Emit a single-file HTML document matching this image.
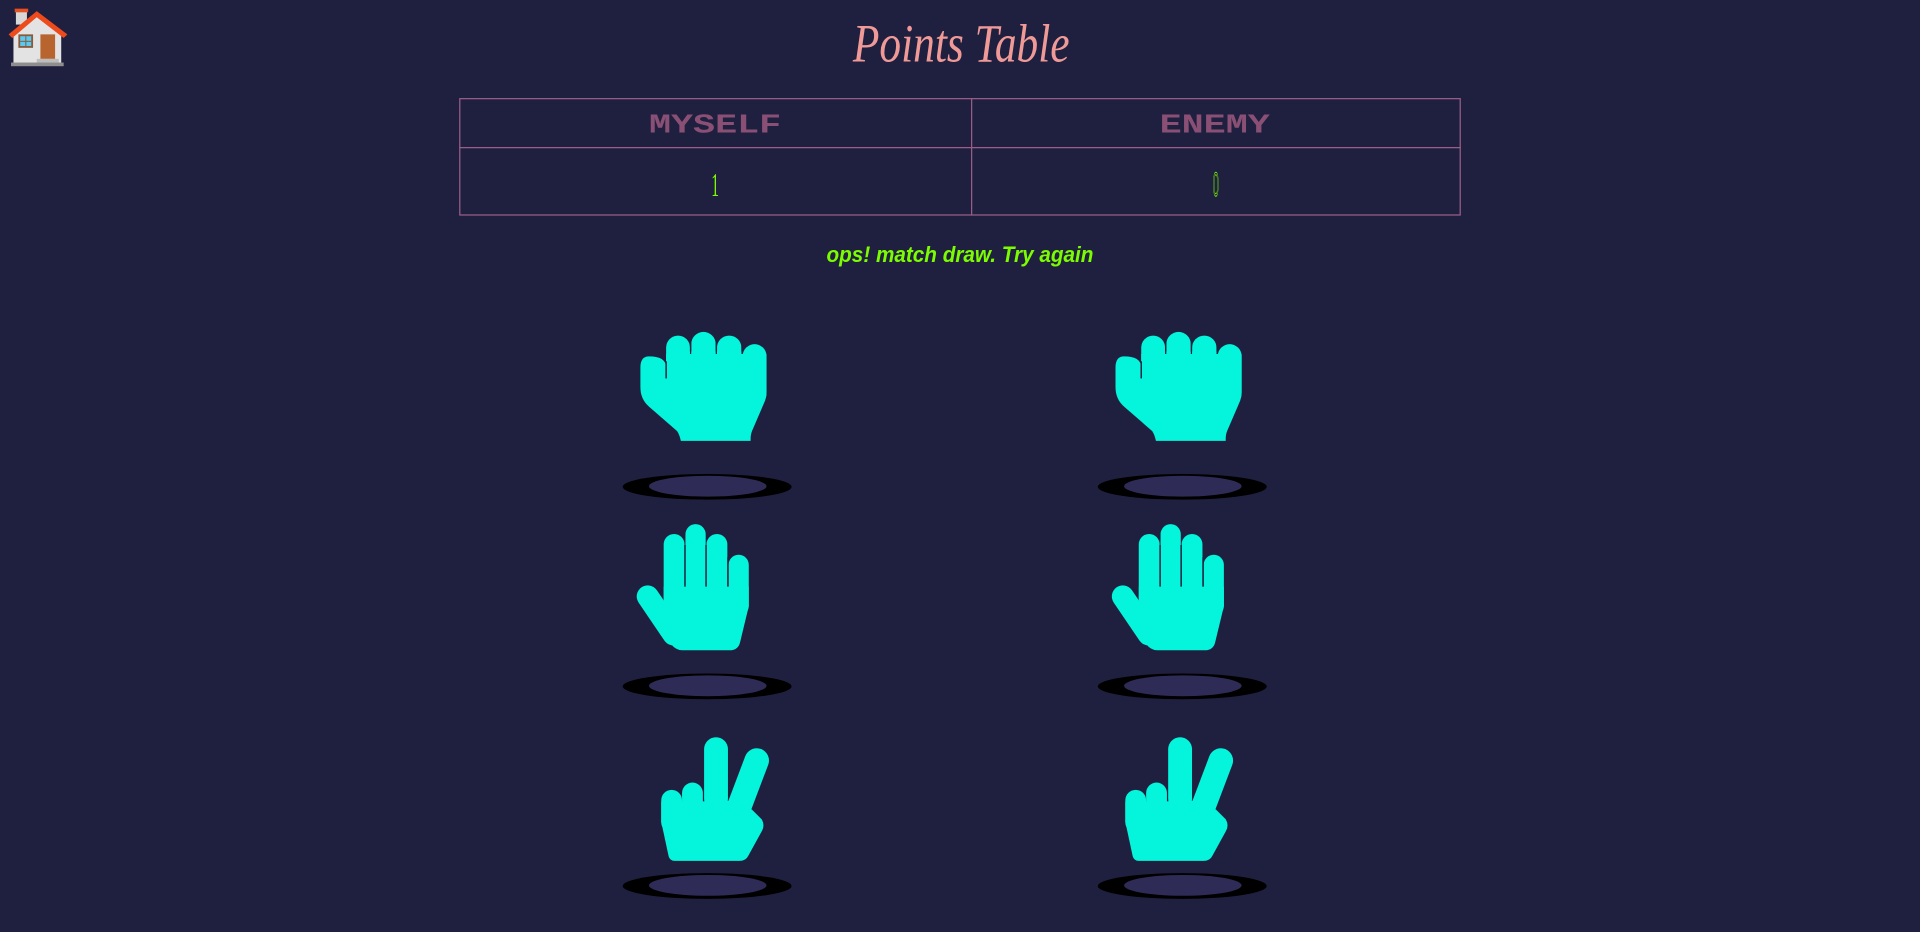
<!DOCTYPE html>
<html><head><meta charset="utf-8"><style>
html,body{margin:0;padding:0;background:#1f203f;width:1920px;height:932px;overflow:hidden}
svg{display:block}
</style></head><body>
<svg width="1920" height="932" viewBox="0 0 1568 761" xmlns="http://www.w3.org/2000/svg">
<defs>
<g id="fist">
 <g fill="#05f4dc">
  <rect x="544" y="274" width="19.5" height="50" rx="9.75"/>
  <rect x="564.5" y="271" width="20" height="50" rx="10"/>
  <rect x="585.5" y="274" width="20" height="50" rx="10"/>
  <rect x="606.5" y="281" width="19.5" height="50" rx="9.75"/>
  <path d="M530 291 Q544 291 544 300 L544 289 L626 289 L626 320 Q626 325 624 329 L615 350 Q613 354 613 358 L613 360 L556 360 Q555 355 553 352 L530 332 Q523 326 523 316 L523 300 Q523 291 530 291Z"/>
 </g>
 <g stroke="#1f203f" stroke-width="1.2">
  <line x1="564" y1="274" x2="564" y2="287"/>
  <line x1="585" y1="274" x2="585" y2="287"/>
  <line x1="606" y1="280" x2="606" y2="287"/>
  <line x1="544" y1="295" x2="544" y2="309"/>
 </g>
</g>
<g id="paper">
 <g fill="#05f4dc">
  <rect x="542" y="436" width="17" height="60" rx="8.5"/>
  <rect x="559.8" y="428" width="16.5" height="60" rx="8.25"/>
  <rect x="577" y="436" width="17" height="60" rx="8.5"/>
  <rect x="595" y="453" width="16.5" height="50" rx="8.25"/>
  <line x1="529" y1="487" x2="550" y2="518" stroke="#05f4dc" stroke-width="18" stroke-linecap="round"/>
  <path d="M542 479 L611.5 479 L611.5 495 L604.5 524 Q603 531 596 531 L557 531 Q552 531 548 526 L534 506 L542 500Z"/>
 </g>
 <g stroke="#1f203f" stroke-width="1.2">
  <line x1="559.4" y1="445" x2="559.4" y2="479"/>
  <line x1="576.6" y1="445" x2="576.6" y2="479"/>
  <line x1="594.5" y1="455" x2="594.5" y2="479"/>
 </g>
</g>
<g id="scissors" fill="#05f4dc">
  <rect x="576" y="602" width="19.5" height="60" rx="9.75"/>
  <line x1="619" y1="621" x2="605" y2="658" stroke="#05f4dc" stroke-width="20" stroke-linecap="round"/>
  <rect x="558" y="639" width="17" height="35" rx="8.5"/>
  <rect x="541" y="645" width="17" height="35" rx="8.5"/>
  <path d="M541 655 L597 654 L615 661 L623 669 Q626 674 623 679 L612 699 Q610 703 605 703 L552 703 Q548 703 547 699 L541 671Z"/>
</g>
<g id="pad">
  <ellipse cx="577.5" cy="397.5" rx="69" ry="10.5" fill="#000"/>
  <ellipse cx="578" cy="397" rx="48" ry="8.5" fill="#2e2b56"/>
</g>
</defs>

<rect x="13" y="8" width="9" height="12" fill="#d8d8d8"/>
<rect x="12" y="7" width="11" height="3" fill="#e9501f"/>
<path d="M11 27 L30 11 L50 27 L50 53 L11 53Z" fill="#e3e3e3"/>
<path d="M7 28 L30 9 L55 28 L52 31 L30 14 L10 31Z" fill="#ef4a1c"/>
<rect x="15" y="28" width="12" height="11" fill="#8a5a3a"/>
<rect x="16.5" y="29.5" width="9" height="8" fill="#5cc9f0"/>
<rect x="20.7" y="29.5" width="0.8" height="8" fill="#8a5a3a"/>
<rect x="16.5" y="33.3" width="9" height="0.8" fill="#8a5a3a"/>
<rect x="33" y="28" width="12" height="20" fill="#b8642e"/>
<rect x="30" y="48" width="18" height="3" fill="#bdbdbd"/>
<rect x="9" y="51" width="43" height="3" fill="#8e8e8e"/>

<text x="785" y="50" text-anchor="middle" font-family="Liberation Serif, serif" font-style="italic" font-size="44" fill="#f09a98" textLength="177" lengthAdjust="spacingAndGlyphs">Points Table</text>

<g stroke="#9b5f86" stroke-width="1" fill="none">
  <rect x="375.5" y="80.5" width="817" height="95"/>
  <line x1="375" y1="120.5" x2="1193" y2="120.5"/>
  <line x1="793.5" y1="80" x2="793.5" y2="176"/>
</g>
<text x="584" y="108" text-anchor="middle" font-family="Liberation Mono, monospace" font-weight="bold" font-size="22" fill="#8a4f75" textLength="108" lengthAdjust="spacingAndGlyphs">MYSELF</text>
<text x="992" y="108" text-anchor="middle" font-family="Liberation Mono, monospace" font-weight="bold" font-size="22" fill="#8a4f75" textLength="90" lengthAdjust="spacingAndGlyphs">ENEMY</text>
<text x="584" y="160" text-anchor="middle" font-family="Liberation Serif, serif" font-size="28" fill="#7cfc00" transform="translate(584 0) scale(0.45 1) translate(-584 0)">1</text>
<text x="993" y="160" text-anchor="middle" font-family="Liberation Sans, sans-serif" font-size="28" fill="none" stroke="#7cfc00" stroke-width="0.8" transform="translate(993 0) scale(0.3 1) translate(-993 0)">0</text>

<text x="784" y="214" text-anchor="middle" font-family="Liberation Sans, sans-serif" font-weight="bold" font-style="italic" font-size="18" fill="#7cfc00" textLength="218" lengthAdjust="spacingAndGlyphs">ops! match draw. Try again</text>

<use href="#fist"/><use href="#fist" transform="translate(388 0)"/>
<use href="#paper"/><use href="#paper" transform="translate(388 0)"/>
<use href="#scissors" transform="translate(-1 0)"/><use href="#scissors" transform="translate(378 0)"/>
<use href="#pad"/><use href="#pad" transform="translate(388 0)"/>
<use href="#pad" transform="translate(0 163)"/><use href="#pad" transform="translate(388 163)"/>
<use href="#pad" transform="translate(0 326)"/><use href="#pad" transform="translate(388 326)"/>
</svg>
</body></html>
